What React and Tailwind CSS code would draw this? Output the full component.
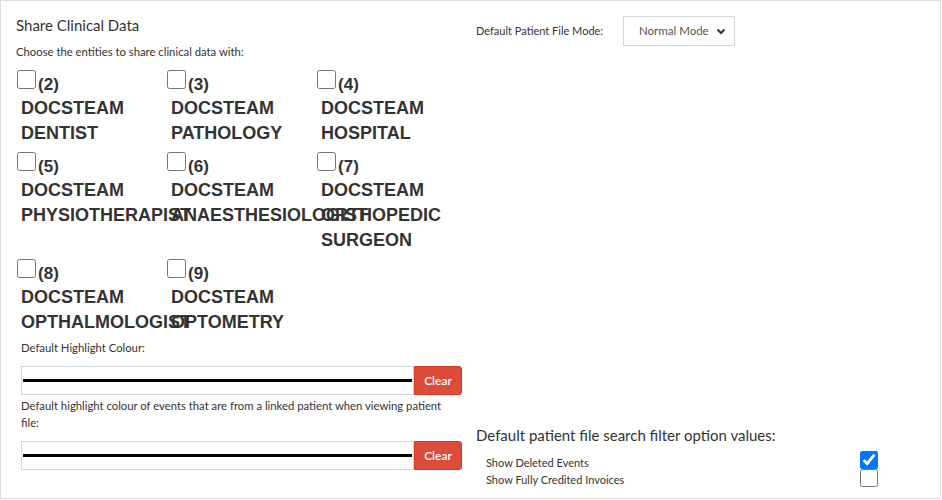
import React from 'react';

const entities = [
  { id: 2, name: 'DOCSTEAM DENTIST' },
  { id: 3, name: 'DOCSTEAM PATHOLOGY' },
  { id: 4, name: 'DOCSTEAM HOSPITAL' },
  { id: 5, name: 'DOCSTEAM PHYSIOTHERAPIST' },
  { id: 6, name: 'DOCSTEAM ANAESTHESIOLOGIST' },
  { id: 7, name: 'DOCSTEAM ORTHOPEDIC SURGEON' },
  { id: 8, name: 'DOCSTEAM OPTHALMOLOGIST' },
  { id: 9, name: 'DOCSTEAM OPTOMETRY' },
];

const EntityOption = ({ id, name }) => (
  <div className="w-[150px]">
    <label className="flex items-end h-[32px]">
      <input type="checkbox" className="w-[19px] h-[19px] m-0 ml-[1px] mb-[3px]" />
      <span className="text-[17px] font-bold text-[#333] leading-none ml-[2px] mb-[-1px]">({id})</span>
    </label>
    <div className="w-[130px] pl-[5px] mt-[4px] mb-[-4px] text-[18px] font-bold text-[#333] leading-[25px] whitespace-normal">
      {name}
    </div>
  </div>
);

const ColourPicker = () => (
  <div className="flex h-[29px]">
    <div className="flex-1 border border-[#d2d6de] flex items-center px-[1px]">
      <div className="w-full h-[3px] bg-black" />
    </div>
    <button className="w-[48px] bg-[#dd4b39] border border-[#d73925] rounded-r-[3px] text-white text-[12px] font-semibold">
      Clear
    </button>
  </div>
);

const App = () => {
  return (
    <div
      className="w-[941px] h-[499px] border border-[#dcdcdc] bg-white text-[#333] flex"
      style={{ fontFamily: 'Lato, "Liberation Sans", sans-serif' }}
    >
      <div className="w-[461px] pl-[15px] pt-[13px]">
        <h3 className="text-[15px] leading-[22px] text-[#333]">Share Clinical Data</h3>
        <p className="text-[11.3px] leading-[16px] mt-[8px] text-[#333]">Choose the entities to share clinical data with:</p>

        <div className="grid grid-cols-[150px_150px_150px]" style={{ fontFamily: '"Liberation Sans", Arial, sans-serif' }}>
          {entities.map(e => (
            <EntityOption key={e.id} {...e} />
          ))}
        </div>

        <div className="pl-[5px] mt-[8px]">
          <p className="text-[11.3px] leading-[17px] mb-[10px]">Default Highlight Colour:</p>
          <ColourPicker />
          <p className="text-[11.3px] leading-[17px] mt-[2px] mb-[10px] pr-[10px]">
            Default highlight colour of events that are from a linked patient when viewing patient file:
          </p>
          <ColourPicker />
        </div>
      </div>

      <div className="flex-1 pl-[14px] pt-[15px] pr-[10px] flex flex-col">
        <div className="flex items-center">
          <span className="text-[11px] w-[147px]">Default Patient File Mode:</span>
          <div className="w-[112px] h-[30px] border border-[#d2d6de] flex items-center justify-between pl-[15px] pr-[8px]">
            <span className="text-[11.5px] text-[#555]">Normal Mode</span>
            <svg width="10" height="10" viewBox="0 0 10 10">
              <path d="M1.5 3.5 L5 7 L8.5 3.5" stroke="#333" strokeWidth="2" fill="none" />
            </svg>
          </div>
        </div>

        <div className="flex-1" />

        <div className="pb-[10px]">
          <h4 className="text-[15px] leading-[22px] text-[#333]">Default patient file search filter option values:</h4>
          <div className="flex pl-[10px] mt-[5px]">
            <div className="w-[374px] text-[11px] leading-[17px] pt-[3px]">
              <div>Show Deleted Events</div>
              <div>Show Fully Credited Invoices</div>
            </div>
            <div className="flex flex-col">
              <input type="checkbox" defaultChecked className="w-[18px] h-[18px] m-0" />
              <input type="checkbox" className="w-[18px] h-[18px] m-0" />
            </div>
          </div>
        </div>
      </div>
    </div>
  );
};

export default App;
